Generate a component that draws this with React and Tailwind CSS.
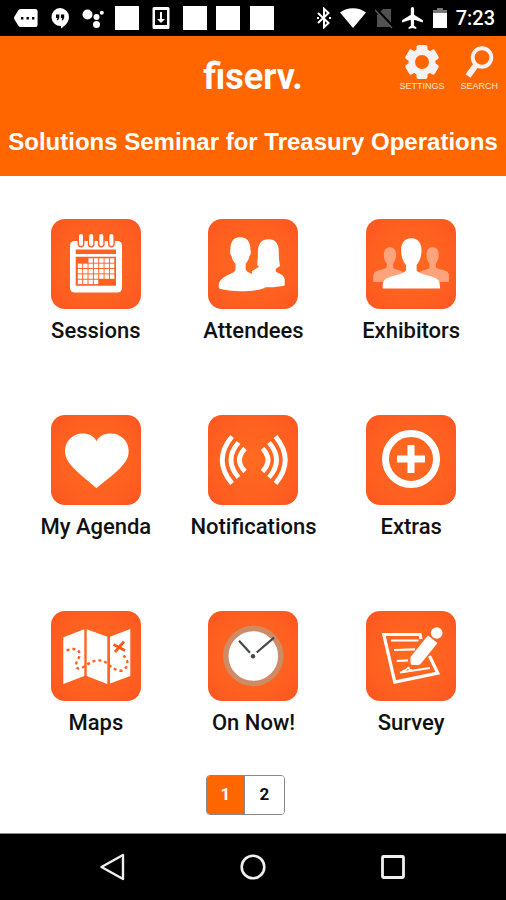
import React from "react";

function StatusBar() {
  return (
    <div className="flex h-9 items-center justify-between bg-black pl-[14px] pr-[11px] text-white">
      <div className="flex w-[260px] items-center justify-between">
        <svg viewBox="0 0 24 24" className="size-6" fill="currentColor" aria-label="Messages">
          <path d="M7 3h14a2.600 2.600 0 0 1 2.600 2.600v12.800A2.600 2.600 0 0 1 21 21H7c-1.500 0-2.300-.7-3-1.800L.5 13.400a2.600 2.600 0 0 1 0-2.800L4 4.800C4.700 3.700 5.500 3 7 3z" />
          <path fill="#000" d="M7 11h2.400v2.400H7zM12.500 11h2.400v2.400h-2.400zM18 11h2.400v2.400H18z" />
        </svg>
        <svg viewBox="0 0 24 24" className="size-6" fill="currentColor" aria-label="Hangouts">
          <path d="M12 2a9 9 0 0 1 9 9c0 5-4 9-8 11.500V20a9 9 0 1 1-1-18z" />
          <path fill="#000" d="M8 8.500h3.300v3.400L10 14.300H8.600l1-2.400H8zM12.900 8.500h3.300v3.400l-1.300 2.400h-1.400l1-2.400h-1.600z" />
        </svg>
        <svg viewBox="0 0 24 24" className="size-6" fill="currentColor" aria-label="Assistant">
          <circle cx="6.500" cy="8.500" r="5" />
          <circle cx="15.500" cy="11" r="3" />
          <circle cx="15.500" cy="18.500" r="3.500" />
          <circle cx="20.800" cy="6.800" r="2" />
        </svg>
        <span className="size-6 bg-white" />
        <svg viewBox="0 0 24 24" className="size-6" fill="currentColor" aria-label="Download">
          <path fillRule="evenodd" d="M5 1h14a1.500 1.500 0 0 1 1.500 1.500v19A1.500 1.500 0 0 1 19 23H5a1.500 1.500 0 0 1-1.500-1.500v-19A1.500 1.500 0 0 1 5 1zM6 4v15h12V4z" />
          <path d="M11 6h2v7h3l-4 4-4-4h3z" />
        </svg>
        <span className="size-6 bg-white" />
        <span className="size-6 bg-white" />
        <span className="size-6 bg-white" />
      </div>
      <div className="flex items-center gap-[9px]">
        <svg viewBox="0 0 14 22" className="h-[22px] w-[14px]" fill="none" stroke="currentColor" strokeWidth="2" aria-label="Bluetooth">
          <path d="M1 6l10.500 10L7 20.200V1.800L11.500 6 1 16" />
          <path d="M0 11h2M12 11h2" />
        </svg>
        <svg viewBox="0 0 26 22" className="h-[22px] w-[26px]" fill="currentColor" aria-label="Wi-Fi">
          <path d="M0 5.500C7-.3 19-.3 26 5.500L13 21z" />
        </svg>
        <svg viewBox="0 0 18 22" className="h-[22px] w-[18px]" aria-label="No SIM">
          <path fill="#505050" d="M8 2h8v18H2V8z" />
          <path stroke="#000" strokeWidth="3" d="M1 2l17 18" />
          <path stroke="#5a5a5a" strokeWidth="1.500" d="M0 3l17 18" />
        </svg>
        <svg viewBox="2 2 20 20" className="size-[22px]" fill="currentColor" aria-label="Airplane mode">
          <path d="M21 16v-2l-8-5V3.500a1.500 1.500 0 0 0-3 0V9l-8 5v2l8-2.500V19l-2 1.500V22l3.500-1 3.500 1v-1.500L13 19v-5.500z" />
        </svg>
        <svg viewBox="0 0 14 22" className="h-[22px] w-[14px]" aria-label="Battery">
          <path fill="#777" d="M4 1h6v2h4v4H0V3h4z" />
          <path fill="#fff" d="M0 6h14v15H0z" />
        </svg>
        <span className="text-[20px] font-medium leading-6">7:23</span>
      </div>
    </div>
  );
}

function Header() {
  return (
    <header className="bg-[#ff6600] font-['Liberation_Sans',Arial,sans-serif] text-white">
      <div className="grid grid-cols-[1fr_auto_1fr] items-start pt-2">
        <span />
        <span className="font-[Roboto,sans-serif] text-[36px] font-bold leading-[66px]">fiserv.</span>
        <div className="flex justify-end gap-4 pr-2 text-[9px] leading-3 text-[#ffe6da]">
          <button className="flex flex-col items-center">
            <svg viewBox="-18 -18 36 36" className="size-9" fill="#f6f1f3" aria-hidden="true">
              <mask id="gear-hole">
                <rect x="-18" y="-18" width="36" height="36" fill="#fff" />
                <circle r="7" fill="#000" />
              </mask>
              <g mask="url(#gear-hole)">
                <circle r="13.500" />
                <rect x="-5.500" y="-17" width="11" height="34" rx="2" />
                <rect x="-5.500" y="-17" width="11" height="34" rx="2" transform="rotate(60)" />
                <rect x="-5.500" y="-17" width="11" height="34" rx="2" transform="rotate(120)" />
              </g>
            </svg>
            <span>SETTINGS</span>
          </button>
          <button className="flex flex-col items-center">
            <svg viewBox="0 0 36 36" className="size-9" fill="none" stroke="#f6f1f3" aria-hidden="true">
              <circle cx="21" cy="13.500" r="9.300" strokeWidth="3.900" />
              <path d="M15 21L7 32" strokeWidth="6" />
            </svg>
            <span>SEARCH</span>
          </button>
        </div>
      </div>
      <h1 className="whitespace-nowrap pb-3 pt-2.5 text-center text-[24px] font-bold leading-[44px]">
        Solutions Seminar for Treasury Operations
      </h1>
    </header>
  );
}

const calendarCells = [
  [2, 3, 4, 5, 6],
  [0, 1, 2, 3, 4, 5, 6],
  [0, 1, 2, 3, 4, 5, 6],
  [0, 1, 2, 3, 4, 5, 6],
  [0, 1, 2, 3],
];

const icons = {
  sessions: (
    <>
      <rect x="19" y="22" width="52" height="51.500" rx="4.500" fill="#fff" />
      {[30, 40.200, 50.300, 60.400].map((x) => (
        <g key={x}>
          <rect x={x - 3.400} y="17" width="6.800" height="11.500" rx="3.400" fill="#ff6122" />
          <rect x={x - 2} y="15" width="4" height="12" rx="2" fill="#fff" />
        </g>
      ))}
      <path fill="#ff6122" d="M24.700 30.500H65v4.500H24.700zM24.700 37.800H65v29H24.700z" />
      {calendarCells.map((cols, r) =>
        cols.map((c) => (
          <rect key={`${r}-${c}`} x={26.800 + c * 5.350} y={39.300 + r * 5.350} width="4.400" height="4.400" fill="#fff" />
        ))
      )}
    </>
  ),
  attendees: (
    <g fill="#fff">
      <path d="M60.500 20.300c7 0 10.300 4.600 10.300 12 0 6 .3 10 1.200 14.500-.8 1.700-3.800 1.700-4.200 3.500-.3 2 .7 3 2.500 3.800 3.700 1.600 6.400 3.400 6.400 7v5.500c-5 1.500-12 1.900-18.700 1.700H44V52l6-3.500c1.500-.8 0-1.500-.8-2.500.7-4.500.6-9 .7-13.700.3-7.400 3.600-12 10.600-12z" />
      <path d="M32 18.300c7.200 0 10.600 4.800 10.400 12.700.8.500.7 4.500-1 6.200-.6 3.200-2 5.600-3.700 7.500v5.800c1.300 4.500 18.600 6.800 19.300 14.500l-.2 4c-10 4-33.500 4.400-45.100.8-.9-.4-1.100-1.400-1-3 .8-10.500 14.500-11 16.800-15.500v-6.600c-2-1.900-3.300-4.300-3.900-7.500-1.700-1.700-2-5.700-1.200-6.200-.2-7.900 2.800-12.700 9.600-12.700z" />
    </g>
  ),
  exhibitors: (
    <>
      <g fill="#ffa37c">
        <path d="M24 28.300c4.400 0 6.300 3.500 6.100 8-.2 3.700-1.300 6.400-2.900 8.200v4.200c2 2.800 12.800 2.500 12.800 9V63H7.300c0-8-.2-9.700 4-11.200 4.200-1.500 8.400-1.800 9.500-3.800v-3.500c-1.700-1.800-2.800-4.500-2.900-8.200-.2-4.500 1.700-8 6.100-8z" />
        <path d="M66.600 28.300c4.400 0 6.300 3.500 6.100 8-.2 3.700-1.300 6.400-2.900 8.200V48c1.100 2 5.300 2.300 9.500 3.800 4.200 1.500 3.600 3.200 3.600 11.200H50.600v-5.300c0-6.500 10.800-6.200 12.800-9v-4.200c-1.700-1.800-2.800-4.500-2.900-8.200-.2-4.500 1.700-8 6.100-8z" />
      </g>
      <path fill="#fff" d="M45.300 19.300c7.400 0 10.500 5.700 10.200 13-.3 6.300-2.300 10.700-4.900 13.600v5.700c1.800 3.200 10.400 4.500 17.400 7 5 1.800 6 4 6 11H16.700c0-7 .9-9.200 6-11 7-2.500 15.500-3.800 17.300-7v-5.700c-2.700-2.900-4.600-7.300-4.900-13.600-.3-7.300 2.800-13 10.200-13z" />
    </>
  ),
  agenda: (
    <path fill="#fff" d="M45.500 73.300C39 67 30.500 61.500 22.500 53 17 47.200 14 42.500 14 36c0-10 8-17.500 17.500-17.500 6 0 11.500 2.300 14 7.700C48 20.800 53.500 18.500 60 18.500c9.700 0 17.700 7.500 17.700 17.500 0 6.500-3 11.200-8.500 17-8 8.500-17.200 14-23.700 20.300z" />
  ),
  notifications: (
    <g fill="none" stroke="#fff" strokeWidth="4.800">
      <path d="M24 21.500Q4.500 45 24 68.500M30.500 27.500Q15.500 45 30.500 62.500M37 33.500Q26 45 37 56.500" />
      <path d="M67.500 21.500Q87 45 67.500 68.500M61 27.500Q76 45 61 62.500M54.500 33.500Q65.500 45 54.500 56.500" />
    </g>
  ),
  extras: (
    <g fill="none" stroke="#fff" strokeWidth="7">
      <circle cx="45" cy="44" r="25.500" />
      <path d="M31 44h28M45 30v28" />
    </g>
  ),
  maps: (
    <>
      <path fill="#fff" d="M12.300 26.300l21-8V65l-21 8zM35.700 18.300l20.600 7.400V73l-20.600-8zM59 25.700L79.300 18v47L59 72.500z" />
      <path fill="none" stroke="#ff6122" strokeWidth="2.400" strokeDasharray="3 3" d="M15.500 39.500c6-2.500 12-2 13 2.500 1 5-4 8-3.500 13 .5 4 6 2.500 10-.5 6-5 12-6 17-4.500 6 2 9 9 17 9.700 5 0 8-5 7.300-9-.8-4-4-5-4.600-9" />
      <path stroke="#ff5a1c" strokeWidth="2.800" d="M62.500 33.500l11.500 6M73 30.500l-9 10.500" />
    </>
  ),
  now: (
    <>
      <circle cx="45.300" cy="45" r="27.500" fill="#fff" stroke="#cf8a66" strokeWidth="5.400" />
      <path stroke="#45494d" strokeWidth="2.200" d="M31 29.700l11 12M48.700 41.500L66 26.700" />
      <circle cx="45" cy="45.300" r="2.200" fill="#45494d" />
    </>
  ),
  survey: (
    <>
      <path fill="none" stroke="#fff" strokeWidth="3.200" d="M55 28l-1-4.500H17.800l11 47.500 43-9-8.300-17" />
      <path stroke="#fff" strokeWidth="2.200" d="M25 29.500h27.500M28 39l21-.6M30.700 50l11.300-.7M34 61.500L64 57" />
      <path fill="none" stroke="#fff" strokeWidth="1.500" d="M36 60.500q4-1 7-4.500-1 3 3 3" />
      <path fill="#fff" d="M62 24.500l9.500 7.500L55 52.500q-1.500 1.500-3.500 1.500H47q-2.500 0-2.500-2.500V46z" />
      <circle cx="70.700" cy="22" r="5.800" fill="#fff" />
    </>
  ),
};

const tiles = [
  ["sessions", "Sessions"],
  ["attendees", "Attendees"],
  ["exhibitors", "Exhibitors"],
  ["agenda", "My Agenda"],
  ["notifications", "Notifications"],
  ["extras", "Extras"],
  ["maps", "Maps"],
  ["now", "On Now!"],
  ["survey", "Survey"],
];

function Tile({ icon, label }) {
  return (
    <button className="flex flex-col items-center gap-2">
      <span className="size-[90px] overflow-hidden rounded-[14px] bg-[radial-gradient(circle,#ff6b20_0%,#ff6020_60%,#fc5621_100%)]">
        <svg viewBox="0 0 90 90" className="size-full" aria-hidden="true">
          {icons[icon]}
        </svg>
      </span>
      <span className="whitespace-nowrap text-[22px] font-medium leading-7">{label}</span>
    </button>
  );
}

export default function App() {
  return (
    <div className="flex min-h-screen flex-col bg-white font-[Roboto,sans-serif] text-[#111111]">
      <StatusBar />
      <Header />
      <main className="flex flex-1 flex-col items-center pb-[17px] pl-[17px] pr-4 pt-[43px]">
        <div className="grid w-full grid-cols-3 gap-y-[70px]">
          {tiles.map(([icon, label]) => (
            <Tile key={icon} icon={icon} label={label} />
          ))}
        </div>
        <nav aria-label="Pages" className="mr-4 mt-[38px] flex h-10 overflow-hidden rounded border border-[#888888] text-[17px] font-bold">
          <button aria-current="page" className="w-[38px] border-r border-[#888888] bg-[#ff6600] text-white">1</button>
          <button className="w-[39px] bg-white">2</button>
        </nav>
      </main>
      <nav aria-label="System" className="flex h-[67px] items-center justify-center gap-28 border-t border-[#888888] bg-black">
        <button aria-label="Back">
          <svg viewBox="0 0 28 28" className="size-7" fill="none" stroke="#f0f0f0" strokeWidth="2.400" strokeLinejoin="round">
            <path d="M2.500 14L24 2v24z" />
          </svg>
        </button>
        <button aria-label="Home">
          <svg viewBox="0 0 28 28" className="size-7" fill="none" stroke="#f0f0f0" strokeWidth="2.600">
            <circle cx="14" cy="14" r="11.300" />
          </svg>
        </button>
        <button aria-label="Recent apps">
          <svg viewBox="0 0 28 28" className="size-7" fill="none" stroke="#f0f0f0" strokeWidth="2.800">
            <rect x="3.500" y="3.500" width="21" height="21" rx="1" />
          </svg>
        </button>
      </nav>
    </div>
  );
}
